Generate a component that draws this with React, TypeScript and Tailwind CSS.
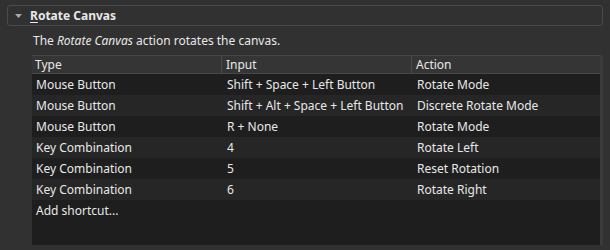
import React from "react";

const rows = [
  ["Mouse Button", "Shift + Space + Left Button", "Rotate Mode"],
  ["Mouse Button", "Shift + Alt + Space + Left Button", "Discrete Rotate Mode"],
  ["Mouse Button", "R + None", "Rotate Mode"],
  ["Key Combination", "4", "Rotate Left"],
  ["Key Combination", "5", "Reset Rotation"],
  ["Key Combination", "6", "Rotate Right"],
];

export default function App() {
  return (
    <div
      className="w-[610px] h-[250px] bg-[#313131] text-[#e8e8e8] text-[12px] overflow-hidden flex flex-col"
      style={{ fontFamily: '"Noto Sans", "Open Sans", sans-serif' }}
    >
      <div className="mx-[7px] mt-[5px] h-[21px] border border-[#4b4b4b] rounded-[3px] flex items-center">
        <svg width="7" height="4" viewBox="0 0 7 4" className="ml-[7px] mr-[8px]">
          <path d="M0 0 L7 0 L3.5 4 Z" fill="#a8a8a8" />
        </svg>
        <span className="font-bold leading-none">
          <span className="underline underline-offset-2">R</span>otate Canvas
        </span>
      </div>
      <div className="ml-[33px] mt-[7px] leading-[16px]">
        The <i>Rotate Canvas</i> action rotates the canvas.
      </div>
      <div className="ml-[32px] mr-[7px] mt-[6px] flex-1 mb-[5px] bg-[#1e1e1e] border-r-[3px] border-[#3a3a3a] flex flex-col">
        <div className="h-[19px] flex bg-[#353535] border-t border-b border-[#474747]">
          <div className="w-[190px] pl-[3px] border-r border-[#4a4a4a] leading-[17px]">Type</div>
          <div className="w-[190px] pl-[4px] border-r border-[#4a4a4a] leading-[17px]">Input</div>
          <div className="flex-1 pl-[4px] leading-[17px]">Action</div>
        </div>
        {rows.map((r, i) => (
          <div
            key={i}
            className={`h-[21px] flex items-center ${i % 2 === 1 ? "bg-[#262626]" : "bg-[#1e1e1e]"}`}
          >
            <div className="w-[190px] pl-[4px]">{r[0]}</div>
            <div className="w-[190px] pl-[5px]">{r[1]}</div>
            <div className="flex-1 pl-[5px]">{r[2]}</div>
          </div>
        ))}
        <div className="h-[21px] flex items-center pl-[4px]">Add shortcut...</div>
      </div>
    </div>
  );
}
